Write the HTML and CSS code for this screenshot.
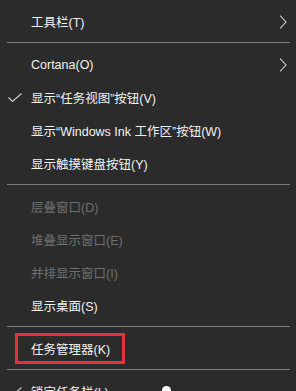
FILE: index.html
```html
<!DOCTYPE html>
<html lang="zh-CN">
<head>
<meta charset="utf-8">
<link rel="stylesheet" href="styles.css">
</head>
<body>
<ul class="menu">
  <li class="item"><span class="mark"></span><span class="label">工具栏(T)</span><span class="arrow"><svg width="8" height="14" viewBox="0 0 8 14"><path d="M1 0.5 L7 7 L1 13.5" fill="none" stroke="#d8d8d8" stroke-width="1.1"/></svg></span></li>
  <li class="sep"></li>
  <li class="item"><span class="mark"></span><span class="label">Cortana(O)</span><span class="arrow"><svg width="8" height="14" viewBox="0 0 8 14"><path d="M1 0.5 L7 7 L1 13.5" fill="none" stroke="#d8d8d8" stroke-width="1.1"/></svg></span></li>
  <li class="item"><span class="mark"><svg width="14" height="10" viewBox="0 0 14 10"><path d="M0.5 4.5 L4.5 8.5 L13.5 0.5" fill="none" stroke="#cfcfcf" stroke-width="1.1"/></svg></span><span class="label">显示“任务视图”按钮(V)</span><span class="arrow"></span></li>
  <li class="item"><span class="mark"></span><span class="label">显示“Windows Ink 工作区”按钮(W)</span><span class="arrow"></span></li>
  <li class="item"><span class="mark"></span><span class="label">显示触摸键盘按钮(Y)</span><span class="arrow"></span></li>
  <li class="sep"></li>
  <li class="item disabled"><span class="mark"></span><span class="label">层叠窗口(D)</span><span class="arrow"></span></li>
  <li class="item disabled"><span class="mark"></span><span class="label">堆叠显示窗口(E)</span><span class="arrow"></span></li>
  <li class="item disabled"><span class="mark"></span><span class="label">并排显示窗口(I)</span><span class="arrow"></span></li>
  <li class="item"><span class="mark"></span><span class="label">显示桌面(S)</span><span class="arrow"></span></li>
  <li class="sep"></li>
  <li class="item"><span class="mark"></span><span class="label"><span class="highlight">任务管理器(K)</span></span><span class="arrow"></span></li>
  <li class="sep"></li>
  <li class="item"><span class="mark"><svg width="14" height="10" viewBox="0 0 14 10"><path d="M0.5 4.5 L4.5 8.5 L13.5 0.5" fill="none" stroke="#cfcfcf" stroke-width="1.1"/></svg></span><span class="label">锁定任务栏(L)</span><span class="arrow"></span></li>
</ul>
<div class="cursor"></div>
</body>
</html>
```
FILE: styles.css
```css
html, body {
  margin: 0;
  padding: 0;
  background: #2b2b2b;
  overflow: hidden;
}
body {
  width: 296px;
  height: 391px;
  position: relative;
  font-family: "Liberation Sans", "Noto Sans CJK SC", sans-serif;
  font-size: 12.5px;
  color: #f2f2f2;
}
.menu {
  list-style: none;
  margin: 0;
  padding: 5px 0 0 0;
}
.item {
  display: grid;
  grid-template-columns: 31px 1fr 20px;
  align-items: center;
  height: 33px;
}
.item.disabled {
  color: #6f6f6f;
}
.mark {
  display: flex;
  align-items: center;
  padding-left: 8px;
  padding-top: 1px;
}
.mark svg, .arrow svg {
  display: block;
}
.label {
  white-space: nowrap;
  display: flex;
  align-items: center;
}
.arrow {
  display: flex;
  align-items: center;
  padding-left: 3px;
}
.sep {
  height: 10px;
  display: flex;
  align-items: flex-start;
  padding: 0 6px 0 7px;
}
.sep::before {
  content: "";
  display: block;
  width: 100%;
  height: 1px;
  margin-top: 4px;
  background: #7c7c7c;
}
.highlight {
  box-sizing: border-box;
  width: 110px;
  height: 31px;
  margin-left: -16px;
  padding-left: 13px;
  border: 3px solid #e2343c;
  display: flex;
  align-items: center;
}
.cursor {
  position: absolute;
  left: 162px;
  top: 386px;
  width: 9px;
  height: 10px;
  border-radius: 5px 5px 0 0;
  background: #ffffff;
}
```
